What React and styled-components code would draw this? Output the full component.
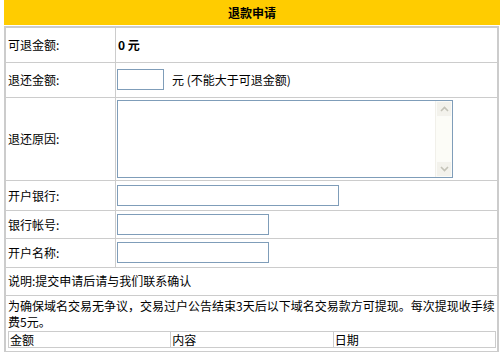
import React from 'react';
import styled, { createGlobalStyle } from 'styled-components';

const GlobalStyle = createGlobalStyle`
  html, body {
    margin: 0;
    padding: 0;
    background: #fff;
  }
  body {
    font-family: "Noto Sans CJK SC", "Noto Sans", sans-serif;
    font-size: 12px;
    color: #000;
  }
`;

function App() {
  return (
    <Page>
      <GlobalStyle />
      <Title>退款申请</Title>
      <FormTable>
        <tbody>
          <Row h={35}>
            <Label>可退金额:</Label>
            <Value><Amount>0 元</Amount></Value>
          </Row>
          <Row h={35}>
            <Label>退还金额:</Label>
            <Value>
              <TextInput w={47} />
              <Unit>元 (不能大于可退金额)</Unit>
            </Value>
          </Row>
          <Row h={83}>
            <Label>退还原因:</Label>
            <Value>
              <AreaBox>
                <Area autoFocus />
                <ScrollBar>
                  <ScrollButton>
                    <svg width="9" height="6" viewBox="0 0 9 6">
                      <path d="M1 5 L4.5 1.5 L8 5" fill="none" stroke="#c4c3b8" strokeWidth="1.6" />
                    </svg>
                  </ScrollButton>
                  <ScrollTrack />
                  <ScrollButton>
                    <svg width="9" height="6" viewBox="0 0 9 6">
                      <path d="M1 1 L4.5 4.5 L8 1" fill="none" stroke="#c4c3b8" strokeWidth="1.6" />
                    </svg>
                  </ScrollButton>
                </ScrollBar>
              </AreaBox>
            </Value>
          </Row>
          <Row h={30}>
            <Label>开户银行:</Label>
            <Value><TextInput w={222} /></Value>
          </Row>
          <Row h={28}>
            <Label>银行帐号:</Label>
            <Value><TextInput w={152} /></Value>
          </Row>
          <Row h={29}>
            <Label>开户名称:</Label>
            <Value><TextInput w={152} /></Value>
          </Row>
          <Row h={28}>
            <Note colSpan={2}>说明:提交申请后请与我们联系确认</Note>
          </Row>
          <Row h={56}>
            <Note colSpan={2}>
              <Notice>为确保域名交易无争议，交易过户公告结束3天后以下域名交易款方可提现。每次提现收手续费5元。</Notice>
              <LogTable>
                <tbody>
                  <tr>
                    <LogHead>金额</LogHead>
                    <LogHead>内容</LogHead>
                    <LogHead>日期</LogHead>
                  </tr>
                </tbody>
              </LogTable>
            </Note>
          </Row>
        </tbody>
      </FormTable>
    </Page>
  );
}

export default App;

const Page = styled.div`
  width: 496px;
  padding-left: 4px;
`;

const Title = styled.div`
  height: 25px;
  background: #ffcc00;
  display: flex;
  align-items: center;
  justify-content: center;
  font-weight: bold;
  font-size: 12px;
`;

const FormTable = styled.table`
  margin-top: 1px;
  width: 495px;
  border-collapse: collapse;
  border: 2px solid #cccccc;
  table-layout: fixed;
`;

const Row = styled.tr`
  height: ${p => p.h}px;
`;

const Label = styled.td`
  width: 107px;
  border: 1px solid #cccccc;
  padding: 0 0 0 2px;
  vertical-align: middle;
  white-space: nowrap;
`;

const Value = styled.td`
  border: 1px solid #cccccc;
  padding: 0 0 0 1px;
  vertical-align: middle;
`;

const Amount = styled.b`
  font-weight: bold;
  padding-left: 1px;
`;

const TextInput = styled.input`
  box-sizing: border-box;
  width: ${p => p.w}px;
  height: 21px;
  border: 1px solid #7f9db9;
  padding: 1px 2px;
  margin: 0;
  vertical-align: middle;
  font: inherit;
  outline: none;
`;

const Unit = styled.span`
  margin-left: 8px;
  vertical-align: middle;
`;

const AreaBox = styled.div`
  box-sizing: border-box;
  width: 336px;
  height: 78px;
  border: 1px solid #7f9db9;
  display: flex;
  background: #fff;
`;

const Area = styled.textarea`
  flex: 1;
  border: none;
  margin: 0;
  padding: 1px 1px;
  resize: none;
  outline: none;
  overflow: hidden;
  font: inherit;
  caret-color: #000;
`;

const ScrollBar = styled.div`
  width: 16px;
  display: flex;
  flex-direction: column;
  background: #fcfcf7;
  border-left: 1px solid #f1f0ea;
`;

const ScrollButton = styled.div`
  height: 16px;
  box-sizing: border-box;
  background: #f3f2ec;
  border: 1px solid #fbfbf8;
  display: flex;
  align-items: center;
  justify-content: center;
`;

const ScrollTrack = styled.div`
  flex: 1;
`;

const Note = styled.td`
  border: 1px solid #cccccc;
  padding: 2px 1px 3px 2px;
  vertical-align: middle;
`;

const Notice = styled.div`
  line-height: 16px;
`;

const LogTable = styled.table`
  width: 100%;
  border-collapse: collapse;
  border: 1px solid #cccccc;
  table-layout: fixed;
  margin-top: 1px;
`;

const LogHead = styled.td`
  border: 1px solid #cccccc;
  padding: 0 1px;
  height: 15px;
  line-height: 15px;
  font-weight: normal;
`;
